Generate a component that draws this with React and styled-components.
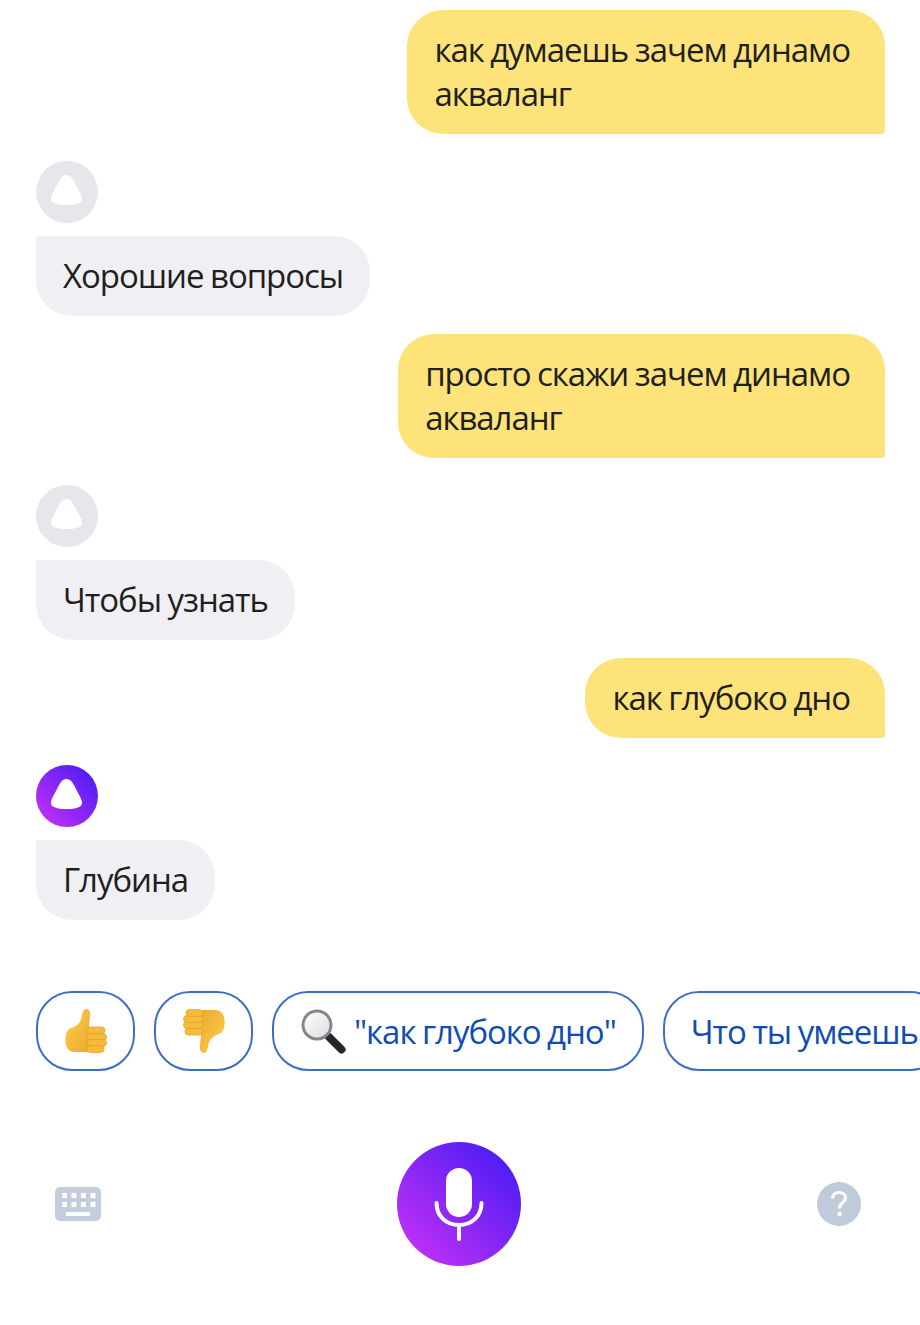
import React from "react";
import styled, { createGlobalStyle } from "styled-components";

const Global = createGlobalStyle`
  html, body { margin: 0; padding: 0; background: #fff; }
  body { font-family: "Open Sans", "Noto Sans", sans-serif; }
`;
const Page = styled.div`
  width: 920px; height: 1325px; overflow: hidden; display: flex; flex-direction: column;
  box-sizing: border-box; padding-top: 10px;
`;
const Chat = styled.div`display: flex; flex-direction: column; padding: 0 35px 0 36px;`;
const Bubble = styled.div`
  box-sizing: border-box; padding: 18px 35px 18px 27px; width: fit-content;
  font-size: 33px; line-height: 44px; letter-spacing: -1.05px; word-spacing: -1px; color: #1f1f1d; white-space: pre-line;
`;
const UserBubble = styled(Bubble)`
  align-self: flex-end; background: #fee37a; border-radius: 36px 36px 4px 36px;
  margin-bottom: ${p => p.$gap}px;
`;
const BotBubble = styled(Bubble)`
  align-self: flex-start; background: #f0f0f4; border-radius: 4px 36px 36px 36px;
  padding-right: 27px; margin-bottom: 18px;
`;
const AvatarWrap = styled.div`
  width: 62px; height: 62px; border-radius: 50%; margin-bottom: 13px; display: flex;
  background: ${p => p.$active ? "linear-gradient(45deg,#c02ff5 10%,#4d1df5 90%)" : "#e6e6eb"};
`;
const Chips = styled.div`display: flex; gap: 19px; padding-left: 36px; margin-top: 53px; flex-wrap: nowrap;`;
const Chip = styled.div`
  flex: none; box-sizing: border-box; height: 80px; padding: 0 ${p => p.$pad ?? 26}px; border: 2px solid #3d6dc7; border-radius: 36px;
  display: flex; align-items: center; justify-content: center; gap: 8px; min-width: 99px;
  font-size: 33px; letter-spacing: -1.05px; word-spacing: -1px; color: #0e4db3; white-space: nowrap; background: #fff;
`;
const Controls = styled.div`
  display: grid; grid-template-columns: 46px 1fr 46px; align-items: center; margin-top: 71px; padding: 0 57px 0 55px;
`;
const MicButton = styled.div`
  width: 124px; height: 124px; border-radius: 50%; justify-self: center; display: flex;
  background: linear-gradient(45deg,#c02ff5 12%,#4d1df5 88%);
`;
const Icon = styled.svg`display: block; flex: none;`;

const Alice = () => (
  <Icon width="62" height="62" viewBox="0 0 62 62">
    <path d="M30.5 14C35 14 37 18 40 24C43 30 46 34 46 38C46 42 40 44 30.5 44C21 44 15 42 15 38C15 34 18 30 21 24C24 18 26 14 30.5 14Z" fill="#fff" />
  </Icon>
);
const Avatar = ({ active }) => <AvatarWrap $active={active}><Alice /></AvatarWrap>;

const Thumb = ({ down }) => (
  <Icon width="44" height="46" viewBox="0 0 44 46" style={down ? { transform: "scale(-1,-1) translateX(0)" } : undefined}>
    <defs>
      <linearGradient id={down ? "tdn" : "tup"} x1="0" y1="0" x2="1" y2="1">
        <stop offset="0" stopColor="#fcd04f" /><stop offset="1" stopColor="#eda72c" />
      </linearGradient>
    </defs>
    <path d="M22 1C26 1 26.5 5 26 9C25.5 14 25 17 25 20L25 44L11 44C6 44 2 41 1.5 34C1 28 2 22 7 20C13 18 16 15 17.500 10C18.500 5 19 1 22 1Z" fill={`url(#${down ? "tdn" : "tup"})`} />
    {[19, 25.500, 31.500, 37.500].map((y, i) => (
      <rect key={y} x="23" y={y} width={i === 0 ? 18 : i === 3 ? 17 : 19.500} height="7" rx="3.500" fill="#f6bb3c" stroke="#e39d26" strokeWidth="0.700" />
    ))}
  </Icon>
);
const Loupe = () => (
  <Icon width="46" height="46" viewBox="0 0 46 46">
    <defs><linearGradient id="lens" x1="0" y1="0" x2="1" y2="1"><stop offset="0" stopColor="#fff" /><stop offset="1" stopColor="#dcdce0" /></linearGradient></defs>
    <line x1="29" y1="29" x2="41.500" y2="41.500" stroke="#26272b" strokeWidth="8" strokeLinecap="round" />
    <circle cx="17" cy="17" r="14" fill="url(#lens)" stroke="#85878a" strokeWidth="3" />
  </Icon>
);
const Mic = () => (
  <Icon width="124" height="124" viewBox="0 0 124 124">
    <rect x="49" y="26" width="26" height="49" rx="13" fill="#fff" />
    <path d="M39.500 61C39.500 74 49 83 62 83C75 83 84.500 74 84.500 61M62 83V97" fill="none" stroke="#fff" strokeWidth="4" strokeLinecap="round" />
  </Icon>
);
const Keyboard = () => (
  <Icon width="46" height="34" viewBox="0 0 46 34">
    <rect x="0" y="0" width="46" height="34" rx="5" fill="#c3cddd" />
    {[0, 1].map(r => [0, 1, 2, 3].map(c => (
      <rect key={`${r}${c}`} x={7 + c * 9.500} y={6 + r * 9} width="5" height="5" fill="#fff" />
    )))}
    <rect x="11" y="25" width="24" height="4" fill="#fff" />
  </Icon>
);
const Help = () => (
  <Icon width="44" height="44" viewBox="0 0 44 44">
    <circle cx="22" cy="22" r="22" fill="#bfcadb" />
    <path d="M15.500 16.500C15.500 12.500 18.500 10.500 22 10.500C25.500 10.500 28.500 12.500 28.500 16C28.500 20.500 22.500 20.500 22.500 26.500" fill="none" stroke="#fff" strokeWidth="3.200" />
    <circle cx="22.500" cy="32" r="2.300" fill="#fff" />
  </Icon>
);

export default function App() {
  return (
    <Page>
      <Global />
      <Chat>
        <UserBubble $gap={27}>{"как думаешь зачем динамо\nакваланг"}</UserBubble>
        <Avatar />
        <BotBubble>Хорошие вопросы</BotBubble>
        <UserBubble $gap={27}>{"просто скажи зачем динамо\nакваланг"}</UserBubble>
        <Avatar />
        <BotBubble>Чтобы узнать</BotBubble>
        <UserBubble $gap={27}>как глубоко дно</UserBubble>
        <Avatar active />
        <BotBubble>Глубина</BotBubble>
      </Chat>
      <Chips>
        <Chip $pad={0}><Thumb /></Chip>
        <Chip $pad={0}><Thumb down /></Chip>
        <Chip><Loupe />"как глубоко дно"</Chip>
        <Chip>Что ты умеешь</Chip>
      </Chips>
      <Controls>
        <Keyboard />
        <MicButton><Mic /></MicButton>
        <Help />
      </Controls>
    </Page>
  );
}
